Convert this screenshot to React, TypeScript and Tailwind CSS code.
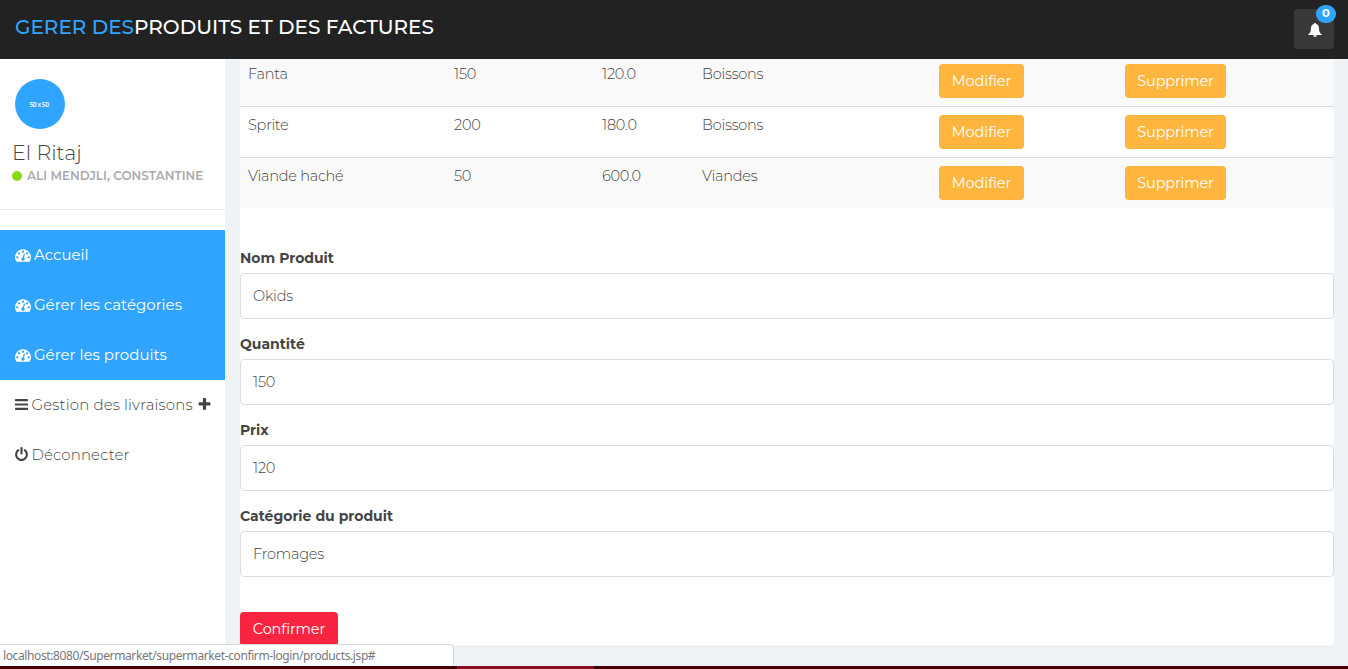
import type { ReactNode } from "react";

const DASH =
  "M384 1152q0-53-37.5-90.5t-90.5-37.5-90.5 37.5-37.5 90.5 37.5 90.5 90.5 37.5 90.5-37.5 37.5-90.5zm192-448q0-53-37.5-90.5t-90.5-37.5-90.5 37.5-37.5 90.5 37.5 90.5 90.5 37.5 90.5-37.5 37.5-90.5zm428 481l101-382q6-26-7.5-48.5t-38.5-29.5-48 6.5-30 39.5l-101 382q-60 5-107 43.5t-63 98.5q-20 77 20 146t117 89 146-20 89-117q16-60-6-117t-72-91zm660-33q0-53-37.5-90.5t-90.5-37.5-90.5 37.5-37.5 90.5 37.5 90.5 90.5 37.5 90.5-37.5 37.5-90.5zm-640-640q0-53-37.5-90.5t-90.5-37.5-90.5 37.5-37.5 90.5 37.5 90.5 90.5 37.5 90.5-37.5 37.5-90.5zm448 192q0-53-37.5-90.5t-90.5-37.5-90.5 37.5-37.5 90.5 37.5 90.5 90.5 37.5 90.5-37.5 37.5-90.5zm320 448q0 261-141 483-19 29-54 29h-1402q-35 0-54-29-141-221-141-483 0-182 71-348t191-286 286-191 348-71 348 71 286 191 191 286 71 348z";
const POWER =
  "M1664 896q0 156-61 298t-164 245-245 164-298 61-298-61-245-164-164-245-61-298q0-182 80.5-343t226.5-270q43-32 95.5-25t83.5 50q32 42 24.5 94.5t-49.5 84.5q-98 74-151.5 181t-53.5 228q0 104 40.5 198.5t109.5 163.5 163.5 109.5 198.5 40.5 198.5-40.5 163.5-109.5 109.5-163.5 40.5-198.5q0-121-53.5-228t-151.5-181q-42-32-49.5-84.5t24.5-94.5q31-43 84-50t95 25q146 109 226.5 270t80.5 343zm-640-768v640q0 52-38 90t-90 38-90-38-38-90v-640q0-52 38-90t90-38 90 38 38 90z";
const PLUS =
  "M1600 736v192q0 40-28 68t-68 28h-416v416q0 40-28 68t-68 28h-192q-40 0-68-28t-28-68v-416h-416q-40 0-68-28t-28-68v-192q0-40 28-68t68-28h416v-416q0-40 28-68t68-28h192q40 0 68 28t28 68v416h416q40 0 68 28t28 68z";

function Glyph({ d, className }: { d: string; className: string }) {
  return (
    <svg viewBox="0 0 1792 1792" fill="currentColor" className={className}>
      <path d={d} />
    </svg>
  );
}

function BarsIcon() {
  return (
    <svg viewBox="0 0 13 11" fill="currentColor" className="mr-[3.5px] mb-px h-[11px] w-[13px]">
      <rect width="13" height="2.2" rx="0.4" />
      <rect y="4.4" width="13" height="2.2" rx="0.4" />
      <rect y="8.8" width="13" height="2.2" rx="0.4" />
    </svg>
  );
}

function BellIcon() {
  return (
    <svg viewBox="0 0 14 14" fill="currentColor" className="h-3.5 w-3.5">
      <path d="M7 0c.7 0 1 .4 1.1.9C10.1 1.4 11 3 11 5c0 3.6.7 5 2.7 6.2V12H.3v-.8C2.3 10 3 8.6 3 5 3 3 3.9 1.4 5.9.9 6 .4 6.3 0 7 0zM5.2 12.3h3.6c-.1 1-.8 1.7-1.8 1.7s-1.7-.7-1.8-1.7z" />
    </svg>
  );
}

function ActiveLink({ children }: { children: ReactNode }) {
  return (
    <a className="flex h-[50px] items-center bg-[#30a5ff] pl-[15px] text-white">
      <Glyph d={DASH} className="mr-[3px] mb-px h-4 w-4 shrink-0" />
      {children}
    </a>
  );
}

const rows = [
  ["Fanta", "150", "120.0", "Boissons"],
  ["Sprite", "200", "180.0", "Boissons"],
  ["Viande haché", "50", "600.0", "Viandes"],
];

const fields = [
  { label: "Nom Produit", value: "Okids" },
  { label: "Quantité", value: "150" },
  { label: "Prix", value: "120" },
  { label: "Catégorie du produit", value: "Fromages" },
];

const rowStyles = [
  "h-[47px] bg-[#f9f9f9]",
  "h-[51px] border-t border-[#dddddd] pt-[3px]",
  "h-[51px] border-t border-[#dddddd] bg-[#f9f9f9] pt-[3px]",
];

export default function App() {
  return (
    <div className="relative flex h-[669px] w-[1348px] flex-col overflow-hidden bg-[#eff3f6] font-['Montserrat','Inter',sans-serif] text-[14px] font-light text-[#444444]">
      <header className="flex h-[59px] shrink-0 items-start justify-between bg-[#222222] pr-3.5 pl-[15px]">
        <h1 className="pt-[12px] text-[20px] leading-[30px] font-medium whitespace-nowrap text-white">
          <span className="text-[#30a5ff]">GERER DES</span>
          <span>PRODUITS ET DES FACTURES</span>
        </h1>
        <button className="relative mt-[9px] flex h-10 w-10 items-center justify-center rounded bg-[#393939] pt-[2px] pl-[2px] text-white">
          <BellIcon />
          <span className="absolute -top-1 left-[22px] flex h-[18px] w-5 items-center justify-center rounded-full bg-[#30a5ff] pb-px text-[11.5px] leading-none font-bold">
            0
          </span>
        </button>
      </header>

      <div className="flex min-h-0 flex-1">
        <aside className="w-[225px] shrink-0 bg-white whitespace-nowrap">
          <div className="h-[151px] border-b border-[#e9ecef] pt-5 pl-3">
            <div className="ml-[3px] flex h-[50px] w-[50px] items-center justify-center rounded-full bg-[#30a5ff] pt-[3px] pr-[2px] font-['Open_Sans',sans-serif] text-[6.5px] leading-none font-semibold tracking-[-0.4px] text-white">
              50 x 50
            </div>
            <div className="mt-3 text-[20.6px] leading-6">El Ritaj</div>
            <div className="mt-px flex h-[20px] items-center text-[12px] font-semibold text-[#aaaaaa]">
              <span className="mr-[5px] h-2.5 w-2.5 rounded-full bg-[#8ad919]" />
              <span className="tracking-[0.03px]">ALI MENDJLI, CONSTANTINE</span>
            </div>
          </div>
          <nav className="mt-5 text-[15px]">
            <div className="font-normal">
              <ActiveLink>Accueil</ActiveLink>
              <ActiveLink>Gérer les catégories</ActiveLink>
              <ActiveLink>Gérer les produits</ActiveLink>
            </div>
            <a className="flex h-[50px] items-center pl-[15px]">
              <BarsIcon />
              <span className="tracking-[0.13px]">Gestion des livraisons</span>
              <Glyph d={PLUS} className="mb-px ml-1 h-[15px] w-[15px]" />
            </a>
            <a className="flex h-[50px] items-center pl-[14px]">
              <Glyph d={POWER} className="mr-[2.5px] mb-px h-[15px] w-[15px]" />
              <span className="tracking-[0.1px]">Déconnecter</span>
            </a>
          </nav>
        </aside>

        <main className="ml-[15px] h-[587px] w-[1094px] rounded-b bg-white shadow-[0_1px_1px_rgba(0,0,0,0.05)]">
          <div className="h-[149px]">
            {rows.map((row, i) => (
              <div key={row[0]} className={`grid grid-cols-[206px_148px_100px_237px_186px_1fr] pl-2 ${rowStyles[i]}`}>
                {row.map((cell, j) => (
                  <span key={j} className="pt-[5px] text-[14.5px] leading-[21px] tracking-[-0.24px]">{cell}</span>
                ))}
                <div className="pt-[5px]">
                  <button className="block h-[34px] w-[85px] rounded bg-[#ffb53e] pt-[2px] text-[14.5px] font-normal tracking-[-0.1px] text-white">Modifier</button>
                </div>
                <div className="pt-[5px]">
                  <button className="block h-[34px] w-[101px] rounded bg-[#ffb53e] pt-[2px] text-[14.5px] font-normal tracking-[-0.18px] text-white">Supprimer</button>
                </div>
              </div>
            ))}
          </div>
          <form className="pt-[40px]">
            {fields.map((f) => (
              <div key={f.label} className="mb-[15px]">
                <label className="block h-[25px] leading-[20px] font-bold">{f.label}</label>
                <div className="flex h-[46px] items-center rounded border border-[#dddddd] px-3 pt-px text-[14.5px] tracking-[-0.24px]">{f.value}</div>
              </div>
            ))}
            <button className="mt-[35px] block h-[34px] w-[98px] rounded bg-[#f9243f] pt-[2px] text-[14.5px] font-normal tracking-[-0.1px] text-white">Confirmer</button>
          </form>
        </main>
      </div>

      <div className="absolute bottom-0 left-0 h-[3px] w-full bg-[#440007]">
        <div className="ml-[457px] h-full w-[137px] bg-[#86101f]" />
      </div>
      <div className="absolute bottom-[3px] left-0 h-[22px] w-[454px] rounded-tr border-t border-r border-[#d5d7d9] bg-white pl-[3px] font-['Noto_Sans',sans-serif] text-[12px] leading-[22px] font-normal whitespace-nowrap text-[#777777]">
        <span className="tracking-[-0.39px]">localhost:8080/Supermarket/supermarket-confirm-login/products.jsp#</span>
      </div>
    </div>
  );
}
